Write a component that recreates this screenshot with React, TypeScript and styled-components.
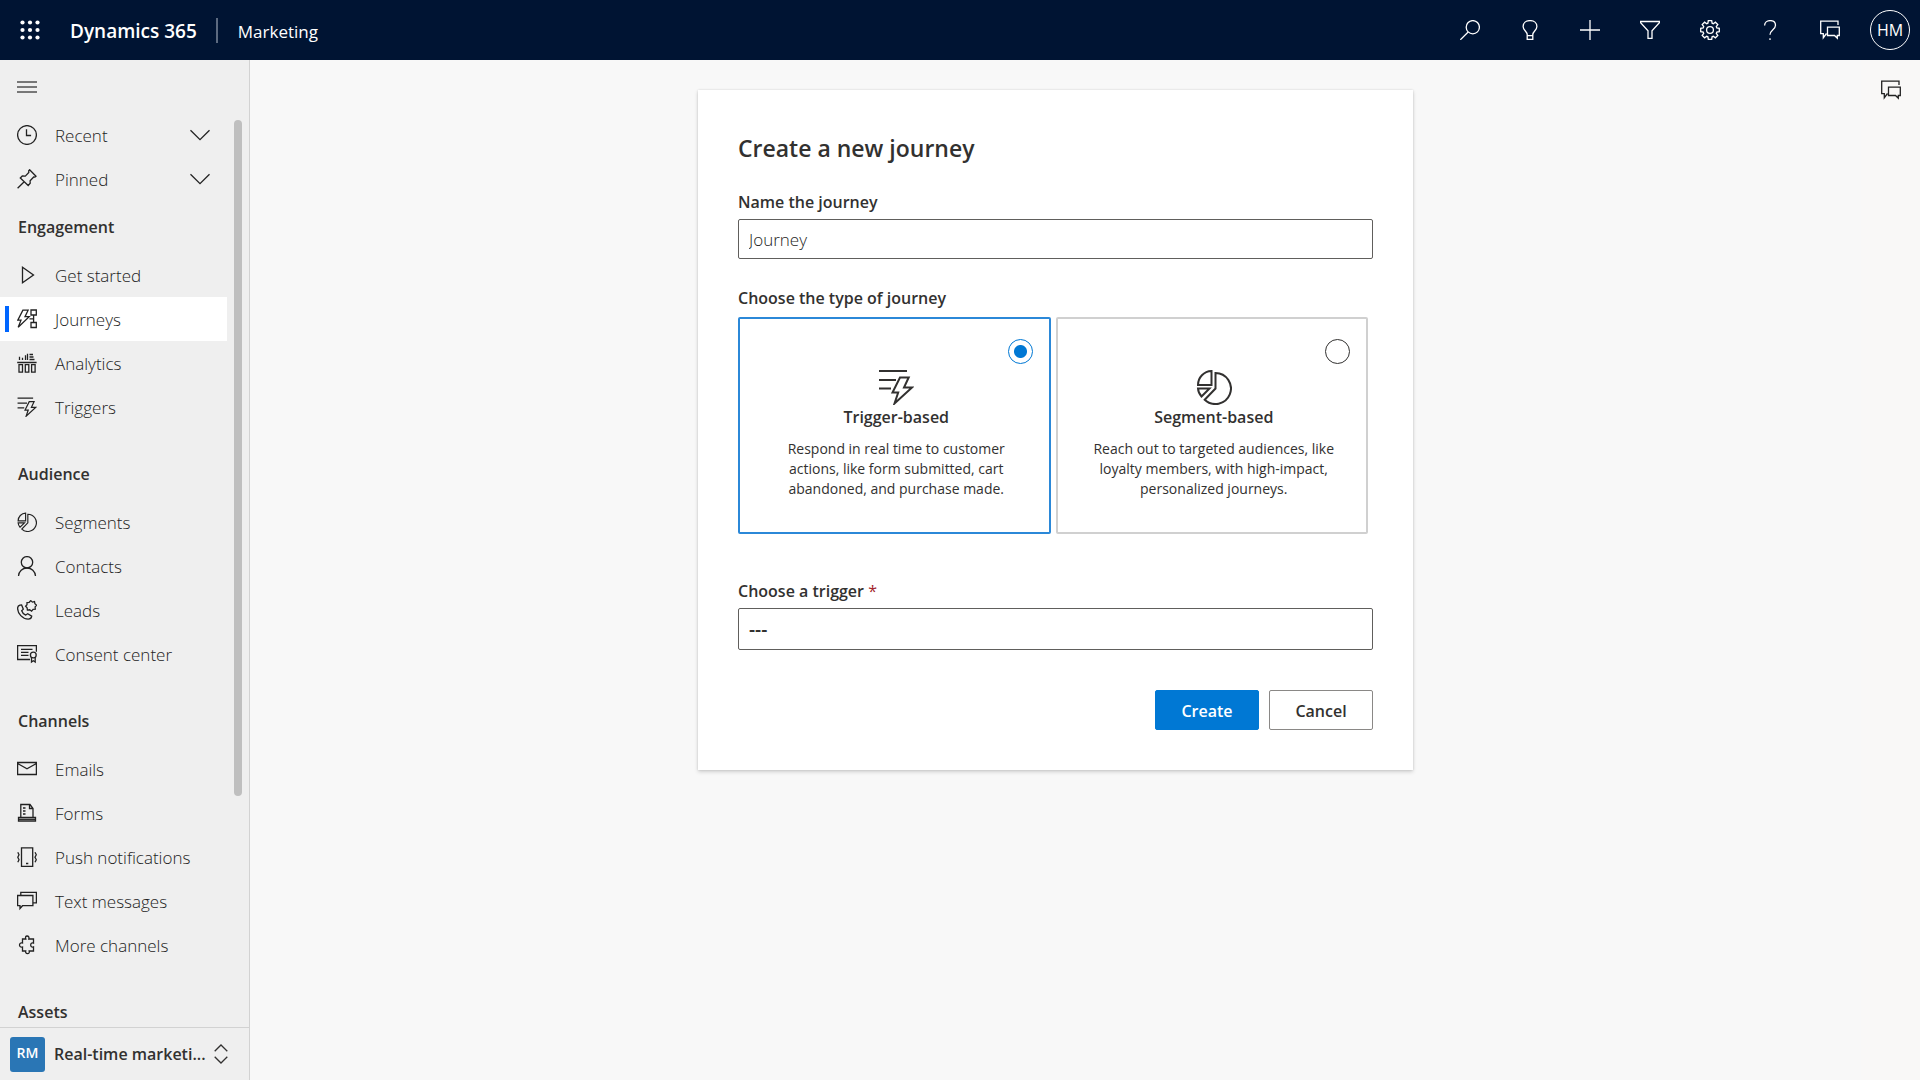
import React, { useState } from 'react';
import styled, { createGlobalStyle, css } from 'styled-components';

const GlobalStyle = createGlobalStyle`
  *, *::before, *::after { box-sizing: border-box; }
  body {
    margin: 0;
    background: #f8f8f8;
    color: #323130;
    font-family: 'Segoe UI', 'Open Sans', 'Noto Sans', sans-serif;
    font-size: 16px;
  }
  button, input, select { font: inherit; color: inherit; }
`;

/* ---------- Icons ---------- */

const Glyph = styled.svg<{ $size?: number }>`
  width: ${(p) => p.$size ?? 20}px;
  height: ${(p) => p.$size ?? 20}px;
  flex: none;
  display: block;
  fill: none;
  stroke: currentColor;
`;

const ICONS: Record<string, React.ReactNode> = {
  recent: (
    <>
      <circle cx="10" cy="10" r="9.4" />
      <path d="M9.5 4.2v6.3h4.6" />
    </>
  ),
  pinned: <path d="M12.6.8l6.4 6.4-1.1.9-1.2-.1-3.6 3.7.1 2.6-2 2.2L3.3 9l2-2 3 .1 3.5-3.6-.1-1.700zM7.2 12.700L.6 19.300" />,
  play: <path d="M5.500 2.300v15.500L16.500 10z" />,
  journeys: (
    <>
      <path d="M5.900 1.200h5.200L8 7.700h4.200L1.200 18.300 4 11.200H.8z" />
      <path d="M14 1h5.300v5H14zM14 13.500h5.300v5H14zM16.600 6v7.500M12.500 9.800h4.100" />
    </>
  ),
  analytics: (
    <>
      <path d="M.2 9.500h19.400M2.500 7V3.800M5.500 7V4.800M8.500 7V2.200M10.500 7V.8M12.500 1.500h3.500M12.500 4h4M12.500 6.500h5" />
      <path d="M2 11.700h3.500v7.500H2zM8.300 11.700h3.500v7.500H8.300zM14.600 11.700h3.500v7.500h-3.500z" />
    </>
  ),
  contacts: (
    <>
      <circle cx="10" cy="6.300" r="5.700" />
      <path d="M1.500 20c.3-4.800 4-8 8.500-8s8.200 3.200 8.500 8" />
    </>
  ),
  leads: (
    <>
      <path d="M2.900 5.200L4.600 5l1.700 4.200-1.600 1.500c.6 2 2 3.500 4 4.400l2-1.300 4 2.300c-.2 2-1.400 3-3.500 3C5.500 19 .6 13.500.6 8.200c0-1.500.8-2.500 2.300-3z" />
      <path d="M13.800.6l1.600 1.500 2.100-.5.400 2.100 1.700 1.500-1.500 1.700.2 2.200-2.200.3-1.500 1.700-2-1.300-2.200.3-.3-2.300-1.500-1.600L10 4.700l0-2.200 2.200-.2z" />
    </>
  ),
  consent: (
    <>
      <path d="M13 15.500H.6V1.600h18.800v6.200M4 5.400h11.500M4 8.400h7.500M4 11.400h7.500" />
      <circle cx="16.300" cy="11" r="2.900" />
      <path d="M14.500 13.300V18l1.800-1.200L18.200 18v-4.700" />
    </>
  ),
  emails: <path d="M.6 3.500h18.800v12H.6zM.6 4.500l9.400 5.200L19.400 4.500" />,
  forms: (
    <>
      <path d="M3.800 14.500V1.500h9.200l3 4v9M12.500 1.500v4H16M1.500 14.500h17v3.500h-17zM6 5h2.500M6 8h2.500M6 11h2.500" />
      <path d="M2 16.300h16" />
    </>
  ),
  push: (
    <>
      <path d="M4.500.8h11.200v18.500H4.500zM9 16.500h2.300" />
      <path d="M.8 5.300L2 7.800.8 10.300 2 12.800.8 15.300M18 5.300l1.300 2.500L18 10.300l1.300 2.500L18 15.300" />
    </>
  ),
  messages: <path d="M.6 4.500h15.300v10.200H5.500L3 17.500v-2.800H.6zM3.800 4.500V1.300h15.600v10.500h-3.500" />,
  more: <path d="M5.500 4h3.300c-.6-1.700-.2-3 1.300-3s2.300 1.300 1.700 3h4.700v4.100c-2-.5-2.800.4-2.800 1.900s1 2.400 2.800 1.900V16h-4.300c.4 1.700-.3 2.700-1.700 2.700S8.300 17.700 8.700 16H5.500v-4c-1.700.6-3-.4-3-2s1.300-2.600 3-2z" />,
  search: (
    <>
      <circle cx="12.800" cy="7.200" r="6.600" />
      <path d="M8.200 12L.3 19.800" />
    </>
  ),
  bulb: <path d="M7.200 14.500c0-3-4.100-4.200-4.100-8C3.100 3 6 .6 10 .6s6.900 2.400 6.900 5.900c0 3.800-4.100 5-4.100 8v4.900H7.200zM7.200 15.600h5.600" />,
  plus: <path d="M10 0v20M0 10h20" />,
  filter: <path d="M.6 1.500h18.800v1.300L12 10.800v7.500H8v-7.500L.6 2.800z" />,
  gear: (
    <>
      <path d="M8.300.7h3.400l.4 2.500 1.200.5 2.100-1.500 2.400 2.400-1.500 2.100.5 1.200 2.500.4v3.400l-2.500.4-.5 1.200 1.500 2.100-2.400 2.400-2.100-1.500-1.200.5-.4 2.500H8.300l-.4-2.500-1.200-.5-2.100 1.500-2.400-2.400 1.500-2.100-.5-1.200-2.500-.4V8.300l2.500-.4.5-1.200-1.500-2.100 2.400-2.400 2.100 1.500 1.200-.5z" />
      <circle cx="10" cy="10" r="3.400" />
    </>
  ),
  help: <path d="M4.600 5.500C4.600 2.500 7 .6 10.200.6s5.300 1.900 5.300 4.700c0 4.300-5.500 4.700-5.500 9.500M10 18.300V20" />,
  chat: <path d="M18 5V1.200H.7v12.500h2.600v4l3.200-4.200M7.500 7.200h11.800v8.300h-2v2.800l-2.800-2.800h-7z" />,
  chevron: <path d="M.5 5.300L10 14.600l9.500-9.300" />,
  updown: <path d="M3.700 7.200L10 1l6.300 6.200M3.700 12.800L10 19l6.300-6.200" />,
};

function Icon({ name, size }: { name: string; size?: number }) {
  return (
    <Glyph viewBox="0 0 20 20" $size={size} strokeWidth="1.3" aria-hidden="true">
      {ICONS[name]}
    </Glyph>
  );
}

function TriggerIcon({ size }: { size: number }) {
  return (
    <Glyph viewBox="0 0 36 36" $size={size} strokeWidth={size > 20 ? 2 : 2.2} aria-hidden="true">
      <path d="M1 2h28M1 11h17M1 19.500h12" />
      <path d="M22 8.500h8.700L26 18.500h8L16.500 34.500l3.700-11H14.500z" />
    </Glyph>
  );
}

function SegmentIcon({ size }: { size: number }) {
  return (
    <Glyph viewBox="0 0 36 36" $size={size} strokeWidth={size > 20 ? 2 : 2.1} aria-hidden="true">
      <path d="M19.500 4v15.500L8.700 30.700A15.500 15.500 0 1 0 19.500 4z" />
      <path d="M15.500 2v14H2A14 14 0 0 1 15.500 2z" />
      <path d="M2 19.500h11.500L5.500 27.500A13 13 0 0 1 2 19.500z" />
    </Glyph>
  );
}

/* ---------- Shell ---------- */

const Shell = styled.div`
  height: 100vh;
  display: flex;
  flex-direction: column;
`;

const TopBar = styled.header`
  flex: none;
  height: 60px;
  display: flex;
  align-items: center;
  background: #001433;
  color: #fff;
`;

const BarButton = styled.button`
  width: 60px;
  height: 60px;
  display: grid;
  place-items: center;
  padding: 0;
  border: 0;
  background: none;
  cursor: pointer;
`;

const Brand = styled.a`
  margin-left: 10px;
  padding: 1px 19px 0 0;
  color: inherit;
  text-decoration: none;
  font-size: 19px;
  font-weight: 600;
`;

const AppName = styled.a`
  padding: 2px 0 0 20px;
  color: inherit;
  text-decoration: none;
  font-size: 17px;
`;

const Divider = styled.span`
  width: 2px;
  height: 25px;
  background: #5c6a80;
`;

const BarActions = styled.div`
  margin-left: auto;
  display: flex;
`;

const Avatar = styled.span`
  width: 40px;
  height: 40px;
  display: grid;
  place-items: center;
  border: 1px solid #fff;
  border-radius: 50%;
  font-size: 16px;
`;

const Body = styled.div`
  flex: 1;
  min-height: 0;
  display: flex;
`;

/* ---------- Sidebar ---------- */

const Sidebar = styled.aside`
  flex: none;
  width: 250px;
  display: flex;
  flex-direction: column;
  background: #efefef;
  border-right: 1px solid #d2d2d2;
`;

const MenuToggle = styled.button`
  flex: none;
  height: 53px;
  padding: 0 17px;
  display: flex;
  align-items: center;
  border: 0;
  background: none;
  color: #000;
`;

const Scroller = styled.div`
  flex: 1;
  min-height: 0;
  display: flex;
`;

const NavList = styled.nav`
  width: 227px;
  overflow: hidden;
`;

const ScrollThumb = styled.div`
  width: 8px;
  height: 74%;
  margin: 7px 0 0 7px;
  border-radius: 4px;
  background: #bfbfbf;
`;

const NavGroup = styled.section`
  & + & { margin-top: 19px; }
`;

const GroupTitle = styled.h2`
  height: 52px;
  margin: 0;
  padding-left: 18px;
  font-size: 16px;
  font-weight: 600;
  line-height: 52px;
`;

const rowStyle = css`
  width: 100%;
  height: 44px;
  padding: 0 17px;
  display: flex;
  align-items: center;
  gap: 18px;
  border: 0;
  background: none;
  color: #222;
  font-size: 17px;
  font-weight: 300;
  text-align: left;
  text-decoration: none;
`;

const RowButton = styled.button`
  ${rowStyle}
`;

const RowText = styled.span`
  flex: 1;
  white-space: nowrap;
`;

const RowLink = styled.a<{ $active?: boolean }>`
  ${rowStyle}
  ${(p) =>
    p.$active &&
    css`
      padding-left: 5px;
      gap: 8px;
      background: #fff;
      &::before {
        content: '';
        width: 4px;
        height: 26px;
        background: #0066ff;
      }
      ${RowText} { margin-left: 10px; }
    `}
`;

const AreaSwitcher = styled.button`
  flex: none;
  height: 53px;
  padding: 0 18px 0 10px;
  display: flex;
  align-items: center;
  border: 0;
  border-top: 1px solid #d2d2d2;
  background: none;
  font-weight: 600;
  text-align: left;
`;

const AreaTile = styled.span`
  flex: none;
  width: 35px;
  height: 35px;
  margin-right: 9px;
  border-radius: 3px;
  background: #2a76b5;
  color: #fff;
  font-size: 14px;
  font-weight: 600;
  line-height: 32px;
  text-align: center;
`;

const AreaName = styled.span`
  flex: 1;
  white-space: nowrap;
`;

/* ---------- Form ---------- */

const Main = styled.main`
  flex: 1;
  min-width: 0;
  padding: 30px 24px;
  overflow: auto;
`;

const SideRail = styled.aside`
  flex: none;
  width: 59px;
  background: #f9f8f7;
  color: #222;
`;

const Card = styled.form`
  max-width: 715px;
  margin: 0 auto;
  padding: 40px;
  background: #fff;
  box-shadow: 0 2px 4px rgba(0, 0, 0, 0.16), 0 0 2px rgba(0, 0, 0, 0.12);
`;

const Title = styled.h1`
  margin: 0 0 24px;
  font-size: 23px;
  font-weight: 600;
  line-height: 36px;
`;

const Field = styled.div`
  display: flex;
  flex-direction: column;
  gap: 5px;
`;

const labelStyle = css`
  font-size: 16px;
  font-weight: 600;
  line-height: 24px;
`;

const Label = styled.label`
  ${labelStyle}
`;

const Required = styled.span`
  color: #a4262c;
  font-weight: 400;
`;

const controlStyle = css`
  width: 100%;
  padding: 0 10px;
  border: 1px solid #605e5c;
  border-radius: 2px;
  background: #fff;
`;

const TextInput = styled.input`
  ${controlStyle}
  height: 40px;
  color: #222;
  font-size: 17px;
  font-weight: 300;
`;

const Select = styled.select`
  ${controlStyle}
  height: 42px;
  appearance: none;
  font-size: 19px;
  font-weight: 600;
`;

const TypeField = styled.fieldset`
  margin: 27px 0 45px;
  padding: 0;
  border: 0;
`;

const Legend = styled.legend`
  ${labelStyle}
  padding: 0;
  margin-bottom: 7px;
`;

const TypeOptions = styled.div`
  display: grid;
  grid-template-columns: 1fr 1fr;
  gap: 5px;
  padding-right: 5px;
`;

const TypeCard = styled.label<{ $selected: boolean }>`
  min-height: 217px;
  padding: 20px 16px 20px 20px;
  display: flex;
  flex-direction: column;
  align-items: center;
  border: 2px solid ${(p) => (p.$selected ? '#2b88d8' : '#d0d0d0')};
  border-radius: 2px;
  text-align: center;
  cursor: pointer;
`;

const Radio = styled.input`
  align-self: flex-end;
  appearance: none;
  width: 25px;
  height: 25px;
  margin: 0 0 5px;
  border: 1px solid #323130;
  border-radius: 50%;
  background: #fff;
  &:checked {
    border-color: #0078d4;
    background: radial-gradient(circle, #0078d4 6px, #fff 7px);
  }
`;

const TypeName = styled.span`
  ${labelStyle}
`;

const TypeText = styled.span`
  padding: 0 12px;
  margin-top: 10px;
  font-size: 14px;
  line-height: 20px;
`;

const Actions = styled.div`
  margin-top: 40px;
  display: flex;
  justify-content: flex-end;
  gap: 10px;
`;

const ActionButton = styled.button<{ $primary?: boolean }>`
  min-width: 104px;
  height: 40px;
  padding: 1px 0 0;
  border: 1px solid ${(p) => (p.$primary ? '#0078d4' : '#8a8886')};
  border-radius: 2px;
  background: ${(p) => (p.$primary ? '#0078d4' : '#fff')};
  color: ${(p) => (p.$primary ? '#fff' : '#323130')};
  font-weight: 600;
`;

/* ---------- Data ---------- */

const GROUPS = [
  {
    title: 'Engagement',
    items: [
      ['play', 'Get started'],
      ['journeys', 'Journeys'],
      ['analytics', 'Analytics'],
      ['triggers', 'Triggers'],
    ],
  },
  {
    title: 'Audience',
    items: [
      ['segments', 'Segments'],
      ['contacts', 'Contacts'],
      ['leads', 'Leads'],
      ['consent', 'Consent center'],
    ],
  },
  {
    title: 'Channels',
    items: [
      ['emails', 'Emails'],
      ['forms', 'Forms'],
      ['push', 'Push notifications'],
      ['messages', 'Text messages'],
      ['more', 'More channels'],
    ],
  },
  { title: 'Assets', items: [] },
];

const BAR_ACTIONS = [
  ['search', 'Search'],
  ['bulb', 'Ideas'],
  ['plus', 'New'],
  ['filter', 'Filter'],
  ['gear', 'Settings'],
  ['help', 'Help'],
  ['chat', 'Chat'],
];

const TYPES = [
  {
    id: 'trigger',
    name: 'Trigger-based',
    text: 'Respond in real time to customer actions, like form submitted, cart abandoned, and purchase made.',
    icon: <TriggerIcon size={36} />,
  },
  {
    id: 'segment',
    name: 'Segment-based',
    text: 'Reach out to targeted audiences, like loyalty members, with high-impact, personalized journeys.',
    icon: <SegmentIcon size={36} />,
  },
];

function NavIcon({ name }: { name: string }) {
  if (name === 'triggers') return <TriggerIcon size={20} />;
  if (name === 'segments') return <SegmentIcon size={20} />;
  return <Icon name={name} />;
}

export default function App() {
  const [type, setType] = useState('trigger');
  const [name, setName] = useState('Journey');

  return (
    <Shell>
      <GlobalStyle />
      <TopBar>
        <BarButton type="button" aria-label="App launcher">
          <Glyph viewBox="0 0 20 20" aria-hidden="true">
            {[2.5, 10, 17.5].map((y) =>
              [2.5, 10, 17.5].map((x) => (
                <circle key={`${x}-${y}`} cx={x} cy={y} r="2.1" fill="currentColor" stroke="none" />
              )),
            )}
          </Glyph>
        </BarButton>
        <Brand href="#">Dynamics 365</Brand>
        <Divider />
        <AppName href="#">Marketing</AppName>
        <BarActions>
          {BAR_ACTIONS.map(([icon, label]) => (
            <BarButton key={icon} type="button" aria-label={label}>
              <Icon name={icon} />
            </BarButton>
          ))}
          <BarButton type="button">
            <Avatar>HM</Avatar>
          </BarButton>
        </BarActions>
      </TopBar>

      <Body>
        <Sidebar>
          <MenuToggle type="button" aria-label="Toggle navigation">
            <Glyph viewBox="0 0 20 20" aria-hidden="true">
              <path d="M0 5h20M0 10h20M0 15h20" />
            </Glyph>
          </MenuToggle>
          <Scroller>
            <NavList>
              <RowButton type="button">
                <Icon name="recent" />
                <RowText>Recent</RowText>
                <Icon name="chevron" />
              </RowButton>
              <RowButton type="button">
                <Icon name="pinned" />
                <RowText>Pinned</RowText>
                <Icon name="chevron" />
              </RowButton>
              {GROUPS.map((group) => (
                <NavGroup key={group.title}>
                  <GroupTitle>{group.title}</GroupTitle>
                  {group.items.map(([icon, label]) => (
                    <RowLink key={label} href="#" $active={label === 'Journeys'}>
                      <NavIcon name={icon} />
                      <RowText>{label}</RowText>
                    </RowLink>
                  ))}
                </NavGroup>
              ))}
            </NavList>
            <ScrollThumb />
          </Scroller>
          <AreaSwitcher type="button" title="Real-time marketing">
            <AreaTile>RM</AreaTile>
            <AreaName>Real-time marketi...</AreaName>
            <Icon name="updown" />
          </AreaSwitcher>
        </Sidebar>

        <Main>
          <Card onSubmit={(e) => e.preventDefault()}>
            <Title>Create a new journey</Title>
            <Field>
              <Label htmlFor="journey-name">Name the journey</Label>
              <TextInput id="journey-name" value={name} onChange={(e) => setName(e.target.value)} />
            </Field>
            <TypeField>
              <Legend>Choose the type of journey</Legend>
              <TypeOptions>
                {TYPES.map((t) => (
                  <TypeCard key={t.id} $selected={type === t.id}>
                    <Radio
                      type="radio"
                      name="journey-type"
                      checked={type === t.id}
                      onChange={() => setType(t.id)}
                    />
                    {t.icon}
                    <TypeName>{t.name}</TypeName>
                    <TypeText>{t.text}</TypeText>
                  </TypeCard>
                ))}
              </TypeOptions>
            </TypeField>
            <Field>
              <Label htmlFor="journey-trigger">
                Choose a trigger <Required>*</Required>
              </Label>
              <Select id="journey-trigger">
                <option>---</option>
              </Select>
            </Field>
            <Actions>
              <ActionButton type="submit" $primary>
                Create
              </ActionButton>
              <ActionButton type="button">Cancel</ActionButton>
            </Actions>
          </Card>
        </Main>

        <SideRail>
          <BarButton type="button" aria-label="Open chat panel">
            <Icon name="chat" />
          </BarButton>
        </SideRail>
      </Body>
    </Shell>
  );
}
